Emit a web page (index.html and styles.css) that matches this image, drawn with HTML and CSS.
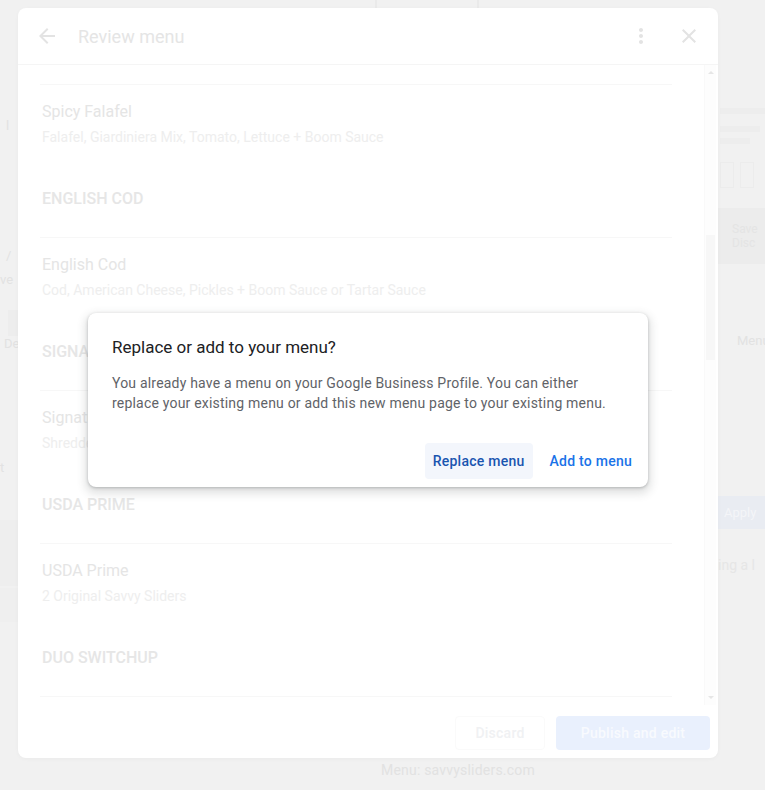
FILE: index.html
```html
<!DOCTYPE html>
<html lang="en">
<head>
<meta charset="utf-8">
<title>Review menu</title>
<link rel="stylesheet" href="styles.css">
</head>
<body>
<div class="page">
  <div class="bg-left">
    <span class="bg-mark m1">l</span>
    <span class="bg-mark m2">/</span>
    <span class="bg-mark m3">ve</span>
    <div class="bg-chip"></div>
    <span class="bg-mark m4">De</span>
    <span class="bg-mark m5">t</span>
    <div class="bg-band"></div>
    <div class="bg-band2"></div>
  </div>
  <div class="bg-center">
    <div class="bg-top"><span></span><span></span></div>
    <div class="bg-foot">Menu: savvysliders.com</div>
  </div>
  <div class="bg-right">
    <div class="bg-line w1"></div>
    <div class="bg-line w2"></div>
    <div class="bg-line w3"></div>
    <div class="bg-boxes"><span></span><span></span></div>
    <div class="bg-block"><span>Save</span><span>Disc</span></div>
    <div class="bg-text">Menu</div>
    <div class="bg-blue">Apply</div>
    <div class="bg-text2">ing a l</div>
  </div>
</div>

<div class="panel">
  <div class="panel-header">
    <svg class="icon" viewBox="0 0 24 24"><path d="M20 11H7.83l5.59-5.59L12 4l-8 8 8 8 1.41-1.41L7.83 13H20v-2z"/></svg>
    <div class="panel-title">Review menu</div>
    <div class="header-actions">
      <svg class="icon" viewBox="0 0 24 24"><path d="M12 8c1.1 0 2-.9 2-2s-.9-2-2-2-2 .9-2 2 .9 2 2 2zm0 2c-1.1 0-2 .9-2 2s.9 2 2 2 2-.9 2-2-.9-2-2-2zm0 6c-1.1 0-2 .9-2 2s.9 2 2 2 2-.9 2-2-.9-2-2-2z"/></svg>
      <svg class="icon" viewBox="0 0 24 24"><path d="M19 6.41L17.59 5 12 10.59 6.41 5 5 6.41 10.59 12 5 17.59 6.41 19 12 13.41 17.59 19 19 17.59 13.41 12z"/></svg>
    </div>
  </div>
  <div class="panel-body">
    <div class="menu-list">
      <section class="menu-section">
        <h3 class="section-heading">SPICY FALAFEL</h3>
        <div class="menu-item">
          <div class="item-name">Spicy Falafel</div>
          <div class="item-desc">Falafel, Giardiniera Mix, Tomato, Lettuce + Boom Sauce</div>
        </div>
      </section>
      <section class="menu-section">
        <h3 class="section-heading">ENGLISH COD</h3>
        <div class="menu-item">
          <div class="item-name">English Cod</div>
          <div class="item-desc">Cod, American Cheese, Pickles + Boom Sauce or Tartar Sauce</div>
        </div>
      </section>
      <section class="menu-section">
        <h3 class="section-heading">SIGNATURE CHICKEN</h3>
        <div class="menu-item">
          <div class="item-name">Signature Chicken</div>
          <div class="item-desc">Shredded Chicken, Pickles + Boom Sauce</div>
        </div>
      </section>
      <section class="menu-section">
        <h3 class="section-heading">USDA PRIME</h3>
        <div class="menu-item">
          <div class="item-name">USDA Prime</div>
          <div class="item-desc">2 Original Savvy Sliders</div>
        </div>
      </section>
      <section class="menu-section">
        <h3 class="section-heading">DUO SWITCHUP</h3>
        <div class="menu-item">
          <div class="item-name">Duo Switchup</div>
          <div class="item-desc">1 Original Savvy Slider + 1 Spicy Slider</div>
        </div>
      </section>
    </div>
    <div class="scrollbar">
      <span class="arrow up"></span>
      <span class="thumb"></span>
      <span class="arrow down"></span>
    </div>
  </div>
  <div class="panel-footer">
    <button class="btn-discard">Discard</button>
    <button class="btn-publish">Publish and edit</button>
  </div>
</div>

<div class="dialog" role="dialog">
  <h2 class="dialog-title">Replace or add to your menu?</h2>
  <p class="dialog-text">You already have a menu on your Google Business Profile. You can either<br>replace your existing menu or add this new menu page to your existing menu.</p>
  <div class="dialog-actions">
    <button class="btn-text btn-focused">Replace menu</button>
    <button class="btn-text">Add to menu</button>
  </div>
</div>
</body>
</html>
```

FILE: styles.css
```css
* { box-sizing: border-box; }

html, body {
  margin: 0;
  padding: 0;
}

body {
  width: 765px;
  height: 790px;
  overflow: hidden;
  background: #f1f1f1;
  font-family: Roboto, "Liberation Sans", Arial, sans-serif;
  position: relative;
}

/* ---------- faded background page ---------- */
.page {
  display: flex;
  width: 765px;
  height: 790px;
}

.bg-left {
  width: 18px;
  display: flex;
  flex-direction: column;
  font-size: 13px;
  color: #e2e2e2;
}
.bg-mark { display: block; line-height: 16px; padding-left: 6px; }
.m1 { margin-top: 118px; }
.m2 { margin-top: 114px; }
.m3 { margin-top: 8px; padding-left: 0; }
.bg-chip { margin: 22px 0 0 8px; height: 26px; background: #ededed; }
.m4 { margin-top: 0; padding-left: 4px; }
.m5 { margin-top: 108px; padding-left: 0; }
.bg-band { margin-top: 44px; height: 66px; background: #eeeeee; }
.bg-band2 { margin-top: 2px; height: 34px; background: #efefef; }

.bg-center {
  width: 700px;
  display: flex;
  flex-direction: column;
}
.bg-top {
  display: flex;
  gap: 100px;
  padding-left: 357px;
  height: 8px;
}
.bg-top span { width: 2px; height: 8px; background: #eaeaea; }
.bg-foot {
  margin-top: 752px;
  padding-left: 363px;
  font-size: 14px;
  line-height: 20px;
  letter-spacing: 0.2px;
  color: #e2e2e2;
}

.bg-right {
  width: 47px;
  display: flex;
  flex-direction: column;
}
.bg-line { height: 6px; background: #ededed; margin-left: 2px; }
.w1 { margin-top: 108px; width: 45px; }
.w2 { margin-top: 12px; width: 40px; }
.w3 { margin-top: 6px; width: 30px; }
.bg-boxes { display: flex; gap: 6px; margin: 18px 0 0 2px; height: 26px; }
.bg-boxes span { width: 14px; border: 1px solid #ececec; }
.bg-block {
  margin-top: 20px;
  height: 56px;
  background: #ececec;
  display: flex;
  flex-direction: column;
  justify-content: center;
  padding-left: 14px;
  font-size: 12px;
  line-height: 14px;
  color: #e4e4e4;
}
.bg-text {
  margin-top: 69px;
  padding-left: 19px;
  font-size: 13px;
  color: #e2e2e2;
}
.bg-blue {
  margin-top: 148px;
  height: 33px;
  background: #e9ecf2;
  color: #f4f5f8;
  font-size: 13px;
  line-height: 33px;
  padding-left: 6px;
}
.bg-text2 {
  margin-top: 28px;
  font-size: 14px;
  color: #e6e6e6;
}

/* ---------- review menu panel (modal) ---------- */
.panel {
  position: absolute;
  left: 18px;
  top: 8px;
  width: 700px;
  height: 750px;
  background: #ffffff;
  border-radius: 8px;
  overflow: hidden;
  display: flex;
  flex-direction: column;
  box-shadow: 0 1px 4px rgba(0, 0, 0, 0.03);
}

.panel-header {
  height: 57px;
  flex: none;
  display: flex;
  align-items: center;
  padding: 0 17px;
  border-bottom: 1px solid #f5f5f5;
}

.icon {
  width: 24px;
  height: 24px;
  fill: #e3e3e3;
  flex: none;
}

.panel-title {
  margin-left: 19px;
  font-size: 18px;
  color: #e5e5e5;
  flex: 1;
}

.header-actions {
  display: flex;
  gap: 24px;
}

.panel-body {
  flex: 1;
  position: relative;
  overflow: hidden;
}

.menu-list {
  margin: -55px 46px 0 22px;
}

.section-heading {
  margin: 0;
  padding: 25px 0 27px 2px;
  font-size: 16px;
  font-weight: 500;
  line-height: 22px;
  color: #e6e6e6;
}

.menu-item {
  border-top: 1px solid #f7f7f7;
  padding: 16px 0 16px 2px;
}

.item-name {
  font-size: 16px;
  line-height: 22px;
  color: #e5e5e5;
}

.item-desc {
  margin-top: 4px;
  font-size: 14px;
  line-height: 20px;
  color: #eeeeee;
}

.scrollbar {
  position: absolute;
  top: 0;
  bottom: 0;
  right: 2px;
  width: 12px;
  background: #fdfdfd;
  border-left: 1px solid #f9f9f9;
}
.arrow {
  position: absolute;
  left: 3px;
  width: 0;
  height: 0;
  border-left: 3px solid transparent;
  border-right: 3px solid transparent;
}
.arrow.up { top: 6px; border-bottom: 3px solid #e6e6e6; }
.arrow.down { bottom: 6px; border-top: 3px solid #e6e6e6; }
.thumb {
  position: absolute;
  left: 1px;
  right: 1px;
  top: 170px;
  height: 125px;
  background: #f7f7f7;
}

.panel-footer {
  height: 53px;
  flex: none;
  display: flex;
  justify-content: flex-end;
  align-items: flex-start;
  gap: 11px;
  padding: 11px 8px 0;
}

.panel-footer button {
  height: 34px;
  border-radius: 4px;
  font-family: inherit;
  font-size: 14px;
  font-weight: 500;
  letter-spacing: 0.25px;
}

.btn-discard {
  width: 90px;
  background: #ffffff;
  border: 1px solid #fafafa;
  color: #f0f1f3;
}

.btn-publish {
  width: 154px;
  background: #e9f0fd;
  border: none;
  color: #f8fafe;
}

/* ---------- confirmation dialog ---------- */
.dialog {
  position: absolute;
  left: 88px;
  top: 313px;
  width: 560px;
  background: #ffffff;
  border-radius: 8px;
  padding: 22px 0 8px;
  box-shadow: 0 1px 3px rgba(60, 64, 67, 0.3), 0 4px 8px 3px rgba(60, 64, 67, 0.15);
}

.dialog-title {
  margin: 0;
  padding: 0 24px;
  font-size: 17px;
  font-weight: 400;
  line-height: 24px;
  color: #202124;
}

.dialog-text {
  margin: 14px 0 0;
  padding: 0 24px;
  font-size: 14px;
  line-height: 20px;
  letter-spacing: 0.2px;
  color: #5f6368;
}

.dialog-actions {
  margin-top: 30px;
  display: flex;
  justify-content: flex-end;
  gap: 9px;
  padding: 0 8px;
}

.btn-text {
  height: 36px;
  padding: 0 8px;
  border: none;
  border-radius: 4px;
  background: transparent;
  font-family: inherit;
  font-size: 14px;
  font-weight: 500;
  letter-spacing: 0.25px;
  color: #1a73e8;
}

.btn-focused {
  background: #f3f6fc;
  color: #1a55b0;
}
```
